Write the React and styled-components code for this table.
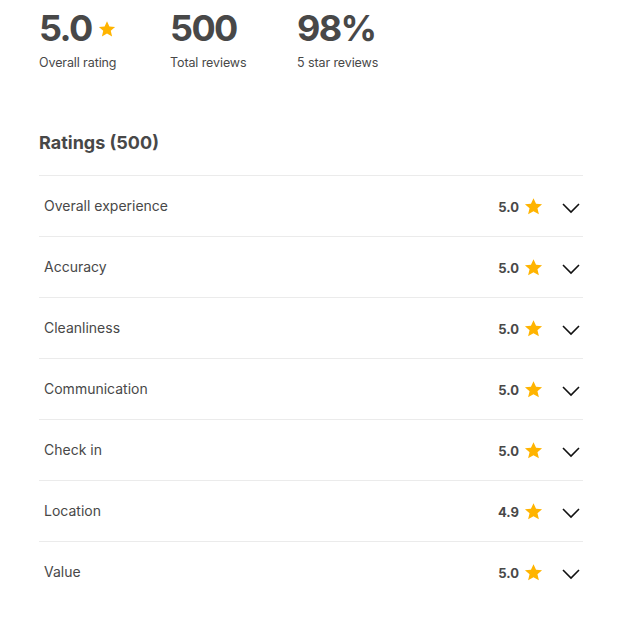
import React from 'react'
import styled, { createGlobalStyle } from 'styled-components'

const GlobalStyle = createGlobalStyle`
    body {
        margin: 0;
        background: #fff;
        font-family: Inter, "Liberation Sans", sans-serif;
        color: #484848;
    }
`

const ratings = [
    { label: 'Overall experience', value: '5.0' },
    { label: 'Accuracy', value: '5.0' },
    { label: 'Cleanliness', value: '5.0' },
    { label: 'Communication', value: '5.0' },
    { label: 'Check in', value: '5.0' },
    { label: 'Location', value: '4.9' },
    { label: 'Value', value: '5.0' },
]

function Star({ size }) {
    return (
        <svg width={size} height={size} viewBox="0 0 24 24">
            <path
                fill="#FFB400"
                d="M12 1.5l3.2 7 7.6.7-5.8 5.1 1.8 7.6L12 17.9l-6.8 4 1.8-7.6-5.8-5.1 7.6-.7z"
            />
        </svg>
    )
}

function Chevron() {
    return (
        <svg width="20" height="12" viewBox="0 0 20 12">
            <path d="M2 2l8 8 8-8" fill="none" stroke="#111" strokeWidth="1.6" />
        </svg>
    )
}

function App() {
    return (
        <Page>
            <GlobalStyle />
            <Stats>
                <Stat>
                    <Big>5.0<Star size={18} /></Big>
                    <Label>Overall rating</Label>
                </Stat>
                <Stat>
                    <Big>500</Big>
                    <Label>Total reviews</Label>
                </Stat>
                <Stat>
                    <Big>98%</Big>
                    <Label>5 star reviews</Label>
                </Stat>
            </Stats>

            <Heading>Ratings (500)</Heading>

            <List>
                {ratings.map(r => (
                    <Row key={r.label}>
                        <RowLabel>{r.label}</RowLabel>
                        <Score>
                            <ScoreValue>{r.value}</ScoreValue>
                            <Star size={19} />
                            <ChevronWrap><Chevron /></ChevronWrap>
                        </Score>
                    </Row>
                ))}
            </List>
        </Page>
    )
}

export default App

const Page = styled.div`
    width: 544px;
    padding: 6px 0 0 39px;
`

const Stats = styled.div`
    display: grid;
    grid-template-columns: 131px 127px auto;
`

const Stat = styled.div`
    display: flex;
    flex-direction: column;
`

const Big = styled.div`
    display: flex;
    align-items: center;
    gap: 6px;
    font-size: 36px;
    font-weight: 700;
    letter-spacing: -1.6px;
    line-height: 44px;
    color: #484848;
    svg {
        margin-top: 1px;
    }
`

const Label = styled.div`
    font-size: 12.5px;
    margin-top: 5px;
    color: #484848;
    letter-spacing: -0.1px;
`

const Heading = styled.h2`
    margin: 61px 0 0;
    font-size: 18px;
    font-weight: 700;
    line-height: 24px;
    color: #484848;
`

const List = styled.div`
    margin-top: 20px;
    border-top: 1px solid #ebebeb;
`

const Row = styled.div`
    display: flex;
    align-items: center;
    justify-content: space-between;
    height: 60px;
    padding-left: 5px;
    border-bottom: 1px solid #ebebeb;
    &:last-child {
        border-bottom: none;
    }
`

const RowLabel = styled.div`
    font-size: 14px;
    color: #484848;
    margin-top: -2px;
`

const Score = styled.div`
    display: flex;
    align-items: center;
    margin-top: 1px;
`

const ScoreValue = styled.span`
    font-size: 13px;
    font-weight: 700;
    color: #484848;
    margin-right: 5px;
`

const ChevronWrap = styled.span`
    display: flex;
    margin-left: 18px;
    margin-right: 2px;
    margin-top: 2px;
`
